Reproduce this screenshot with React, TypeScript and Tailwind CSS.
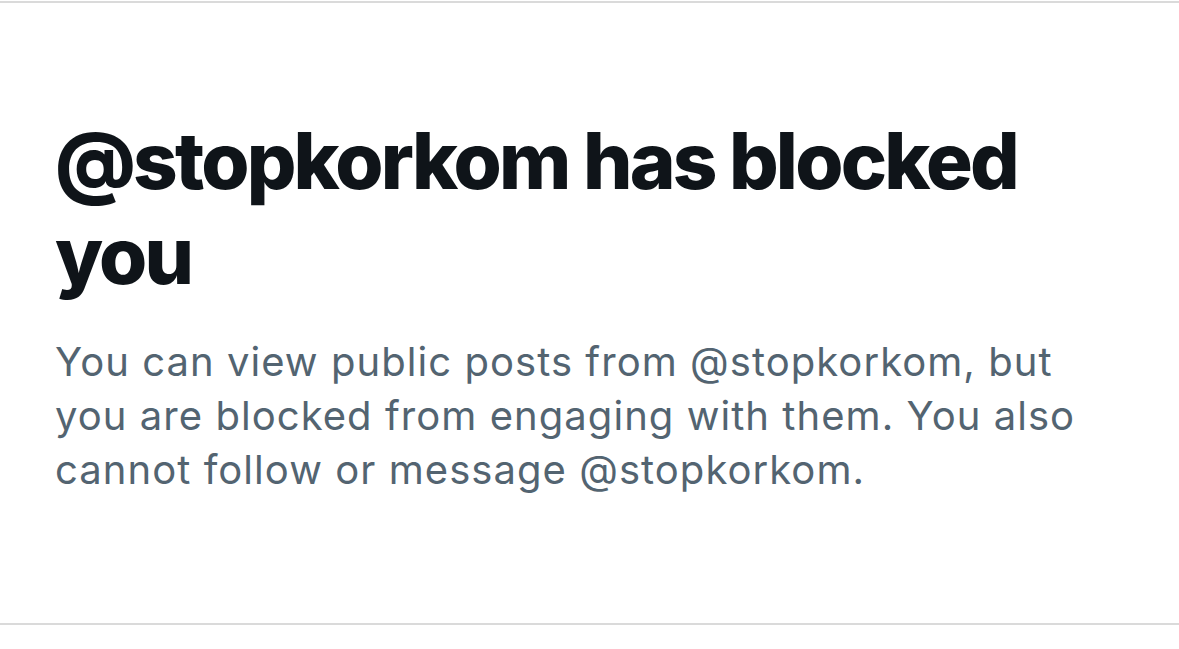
export default function App() {
  return (
    <div className="flex h-[649px] w-full flex-col bg-white font-['Inter',sans-serif]">
      <div className="mt-px h-[2px] bg-[#dadada]" />
      <div className="flex flex-1 flex-col px-[55px] pt-[110px]">
        <div className="w-[1060px]">
          <h1 className="text-[78px] font-extrabold leading-[95px] tracking-[-2.8px] text-[#0f1419]">
            @stopkorkom has blocked you
          </h1>
          <p className="mt-[32px] text-[40px] leading-[54px] tracking-[1.05px] text-[#536471]">
            You can view public posts from @stopkorkom, but you are blocked
            from engaging with them. You also cannot follow or message
            @stopkorkom.
          </p>
        </div>
      </div>
      <div className="mb-[24px] h-[2px] bg-[#dadada]" />
    </div>
  );
}
